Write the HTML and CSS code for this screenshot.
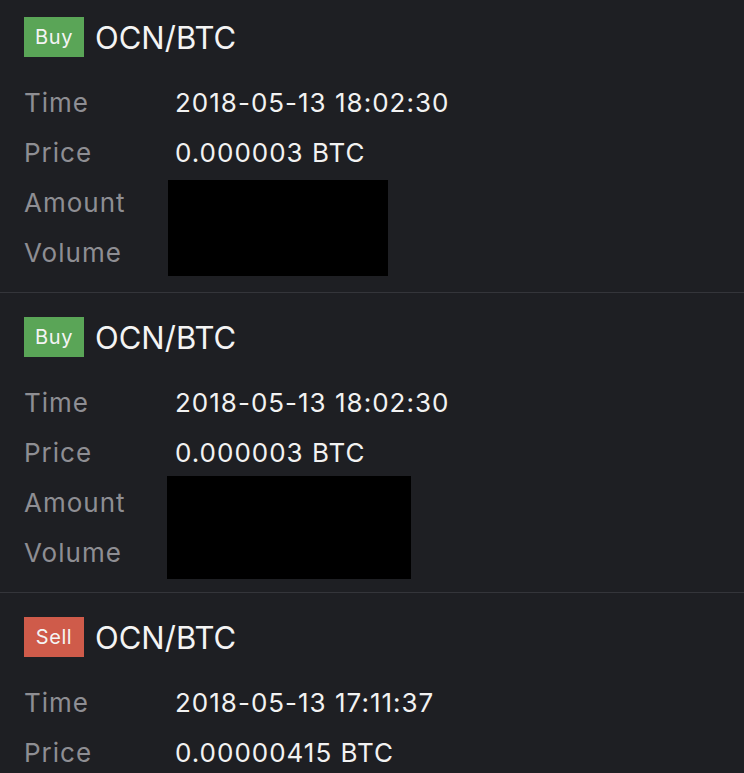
FILE: index.html
```html
<!DOCTYPE html>
<html>
<head>
<meta charset="utf-8">
<link rel="stylesheet" href="styles.css">
</head>
<body>
<div class="list">
  <section class="trade">
    <div class="head"><span class="badge buy">Buy</span><span class="pair">OCN/BTC</span></div>
    <div class="rows">
      <div class="label">Time</div><div class="value">2018-05-13 18:02:30</div>
      <div class="label">Price</div><div class="value">0.000003 BTC</div>
      <div class="label r3">Amount</div>
      <div class="label r4">Volume</div>
      <div class="redact redact-a"></div>
    </div>
  </section>
  <section class="trade">
    <div class="head"><span class="badge buy">Buy</span><span class="pair">OCN/BTC</span></div>
    <div class="rows">
      <div class="label">Time</div><div class="value">2018-05-13 18:02:30</div>
      <div class="label">Price</div><div class="value">0.000003 BTC</div>
      <div class="label r3">Amount</div>
      <div class="label r4">Volume</div>
      <div class="redact redact-b"></div>
    </div>
  </section>
  <section class="trade">
    <div class="head"><span class="badge sell">Sell</span><span class="pair">OCN/BTC</span></div>
    <div class="rows">
      <div class="label">Time</div><div class="value">2018-05-13 17:11:37</div>
      <div class="label">Price</div><div class="value">0.00000415 BTC</div>
    </div>
  </section>
</div>
</body>
</html>
```
FILE: styles.css
```css
html, body {
  margin: 0;
  padding: 0;
  background: #1e1f23;
}
body {
  font-family: Inter, "Liberation Sans", sans-serif;
  color: #f2f2f2;
  overflow: hidden;
  height: 773px;
}
.trade {
  height: 300px;
  border-bottom: 1px solid #34353a;
  padding: 24px 0 0 24px;
  box-sizing: border-box;
}
.trade:first-child {
  height: 293px;
  padding-top: 17px;
}
.head {
  display: flex;
  align-items: center;
  height: 40px;
  gap: 11px;
}
.badge {
  width: 60px;
  height: 40px;
  display: flex;
  align-items: center;
  justify-content: center;
  font-size: 20px;
  letter-spacing: 0.6px;
  color: #f4f4f4;
}
.buy { background: #5aa557; }
.sell { background: #cf5b4a; }
.pair {
  font-size: 31px;
  color: #f4f4f4;
}
.rows {
  display: grid;
  grid-template-columns: 151px 1fr;
  grid-auto-rows: 50px;
  margin-top: 20px;
}
.label, .value {
  display: flex;
  align-items: center;
  font-size: 26px;
  letter-spacing: 1px;
}
.label {
  color: #8e8e93;
  grid-column: 1;
}
.value {
  color: #f2f2f2;
  grid-column: 2;
}
.r3 { grid-row: 3; }
.r4 { grid-row: 4; }
.redact {
  grid-column: 2;
  grid-row: 3 / 5;
  background: #000;
  margin-left: -7px;
}
.redact-a {
  width: 220px;
  height: 96px;
  margin-top: 3px;
}
.redact-b {
  width: 244px;
  height: 103px;
  margin-top: -1px;
  margin-left: -8px;
}
```
